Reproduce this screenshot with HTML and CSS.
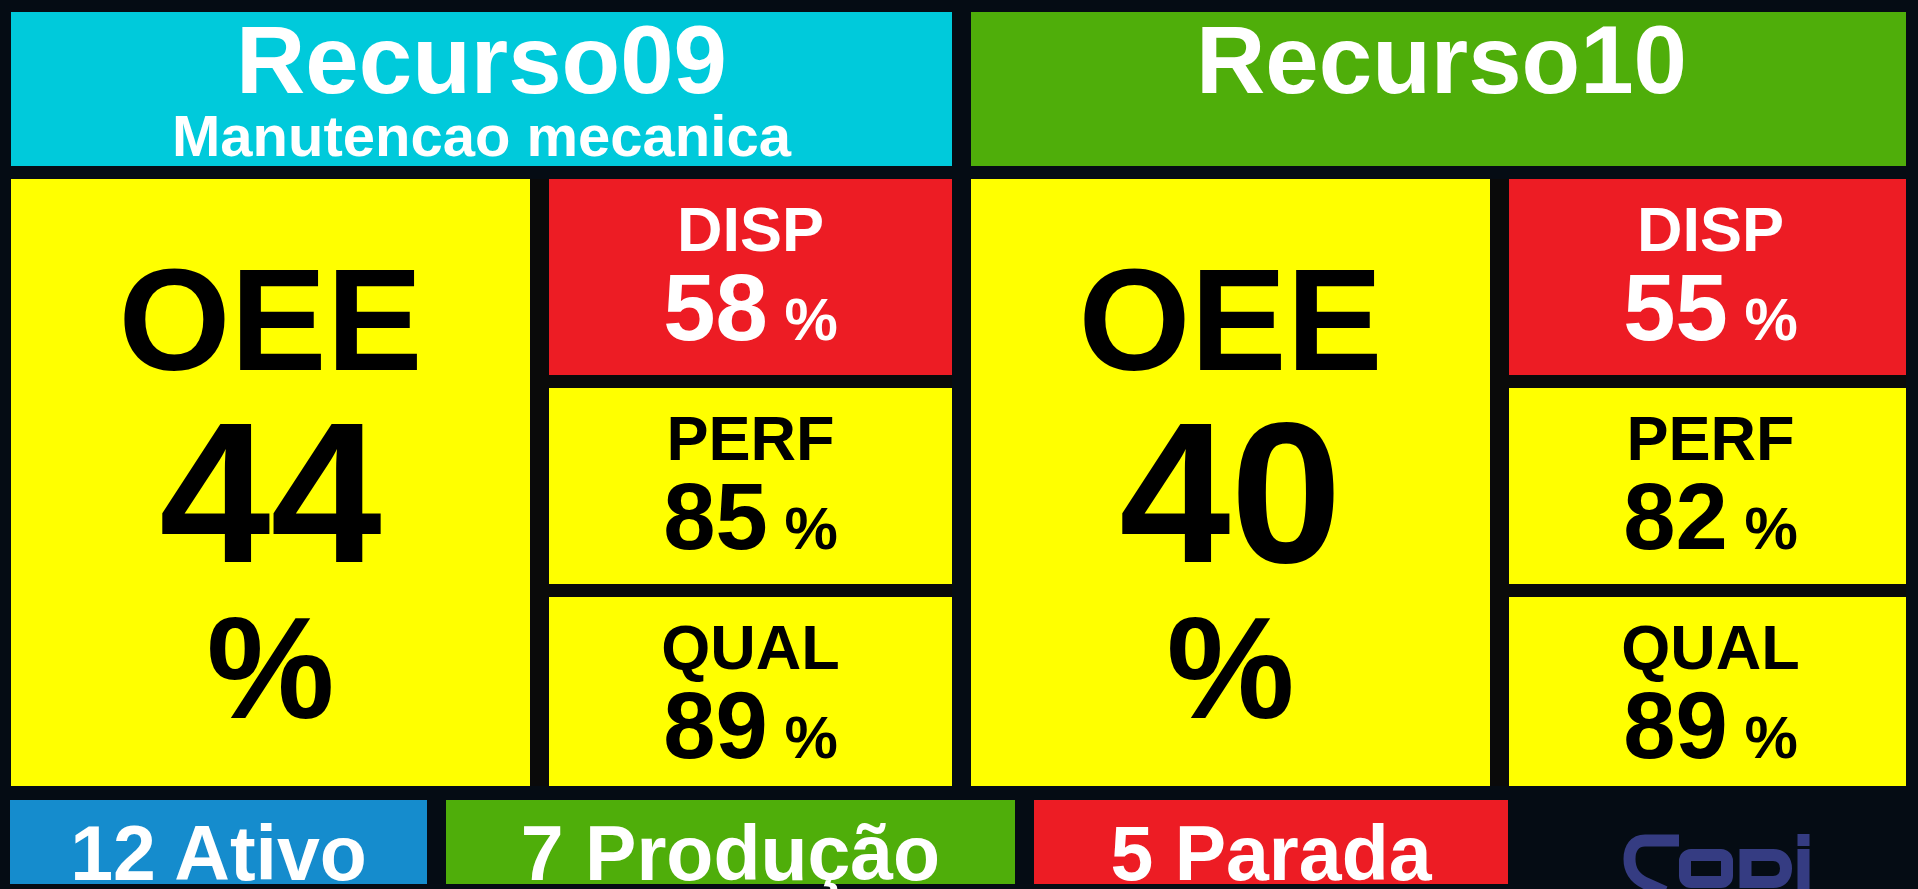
FILE: index.html
```html
<!DOCTYPE html>
<html lang="pt-BR">
<head>
<meta charset="utf-8">
<title>Painel OEE</title>
<link rel="stylesheet" href="styles.css">
</head>
<body>
<main class="board">
  <div class="resources">
    <section class="resource">
      <header class="resource-head is-cyan">
        <h1 class="resource-name">Recurso09</h1>
        <p class="resource-status">Manutencao mecanica</p>
      </header>
      <div class="metrics">
        <div class="oee is-yellow">
          <div class="oee-label">OEE</div>
          <div class="oee-value">44</div>
          <div class="oee-label">%</div>
        </div>
        <div class="metric is-red">
          <div class="metric-label">DISP</div>
          <div class="metric-value">58<span class="metric-unit"> %</span></div>
        </div>
        <div class="metric is-yellow">
          <div class="metric-label">PERF</div>
          <div class="metric-value">85<span class="metric-unit"> %</span></div>
        </div>
        <div class="metric is-yellow">
          <div class="metric-label">QUAL</div>
          <div class="metric-value">89<span class="metric-unit"> %</span></div>
        </div>
      </div>
    </section>
    <section class="resource resource-edge">
      <header class="resource-head is-green">
        <h1 class="resource-name">Recurso10</h1>
      </header>
      <div class="metrics">
        <div class="oee is-yellow">
          <div class="oee-label">OEE</div>
          <div class="oee-value">40</div>
          <div class="oee-label">%</div>
        </div>
        <div class="metric is-red">
          <div class="metric-label">DISP</div>
          <div class="metric-value">55<span class="metric-unit"> %</span></div>
        </div>
        <div class="metric is-yellow">
          <div class="metric-label">PERF</div>
          <div class="metric-value">82<span class="metric-unit"> %</span></div>
        </div>
        <div class="metric is-yellow">
          <div class="metric-label">QUAL</div>
          <div class="metric-value">89<span class="metric-unit"> %</span></div>
        </div>
      </div>
    </section>
  </div>
  <footer class="summary">
    <div class="count is-blue">12 Ativo</div>
    <div class="count is-green">7 Produção</div>
    <div class="count is-red">5 Parada</div>
    <div class="brand">
      <svg class="brand-logo" viewBox="0 0 188 56" role="img" aria-label="Codi">
        <g fill="none" stroke="#353c82" stroke-width="12">
          <path d="M56 6.500H22C12 6.500 6.500 14 6.500 25C6.500 37 12 44 22 49L42 58"/>
          <rect x="62" y="21" width="42" height="27" rx="6"/>
          <path d="M122.500 21H150C159 21 163 27 163 34.500S159 48 150 48H122.500Z"/>
          <path d="M180.500 0V12M180.500 15V56"/>
        </g>
      </svg>
    </div>
  </footer>
</main>
</body>
</html>
```
FILE: styles.css
```css
* {
  box-sizing: border-box;
}

body {
  margin: 0;
  background: #050c14;
  color: #fff;
  font-family: "Liberation Sans", Arial, sans-serif;
  font-weight: bold;
  text-align: center;
}

.is-cyan { background: #00cadb; }
.is-green { background: #4fae0a; }
.is-blue { background: #158ccd; }
.is-red { background: #ed1c24; }
.is-yellow { background: #ff0; color: #000; }

.board {
  display: grid;
  grid-template-rows: minmax(0, 1fr) 84px;
  gap: 14px;
  height: 100vh;
  padding: 12px 12px 5px 10px;
  overflow: hidden;
}

.resources {
  display: grid;
  grid-template-columns: 941fr 935fr;
  gap: 19px;
  min-height: 0;
  margin-left: 1px;
}

.resource {
  display: grid;
  grid-template-rows: auto minmax(0, 1fr);
  gap: 13px;
  min-height: 0;
}

.resource-head {
  min-height: 154px;
}

.resource-name {
  margin: 0;
  font-size: 96px;
  line-height: 96px;
}

.resource-status {
  margin: 0;
  font-size: 58px;
  line-height: 56px;
}

.metrics {
  display: grid;
  grid-template-columns: 519fr 403fr;
  grid-template-rows: 196fr 196fr 189fr;
  gap: 13px 19px;
  min-height: 0;
  background: #0a0a0a;
}

/* The resource at the screen edge is slightly narrower on its right side. */
.resource-edge .metrics {
  grid-template-columns: 519fr 397fr;
}

.resource-edge .resource-head,
.resource-edge .metric {
  padding-left: 6px;
}

.oee {
  display: flex;
  flex-direction: column;
  grid-row: 1 / -1;
  min-height: 0;
  padding-top: 70px;
}

.oee-label {
  font-size: 144px;
  line-height: 144px;
}

.oee-value {
  margin-bottom: 4px;
  font-size: 200px;
  line-height: 200px;
}

.metric {
  min-height: 0;
  padding-top: 19px;
}

.metric-label {
  font-size: 63px;
  line-height: 63px;
}

.metric-value {
  font-size: 94px;
  line-height: 94px;
}

.metric-unit {
  font-size: 60px;
}

/* Descenders and the logo hang below the summary row. */
.summary {
  display: grid;
  grid-template-columns: 417fr 569fr 474fr 379fr;
  grid-template-rows: minmax(0, 1fr);
  gap: 19px;
  min-height: 0;
}

.count {
  padding-top: 15px;
  font-size: 77px;
  line-height: 77px;
  white-space: nowrap;
}

.brand {
  padding: 34px 0 0 96px;
  text-align: left;
}

.brand-logo {
  display: block;
  width: 188px;
  height: 56px;
}
```
